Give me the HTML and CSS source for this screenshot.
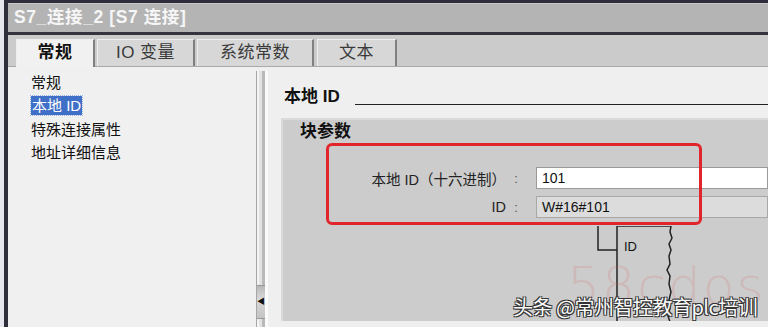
FILE: index.html
```html
<!DOCTYPE html>
<html lang="zh">
<head>
<meta charset="utf-8">
<link rel="stylesheet" href="styles.css">
</head>
<body>
<div class="window">
  <div class="titlebar">S7_连接_2 [S7 连接]</div>
  <div class="tabbar">
    <div class="tab active t1">常规</div>
    <div class="tab t2">IO 变量</div>
    <div class="tab t3">系统常数</div>
    <div class="tab t4">文本</div>
  </div>
  <div class="main">
    <div class="nav">
      <div class="nav-item">常规</div>
      <div class="nav-item"><span class="sel">本地 ID</span></div>
      <div class="nav-item">特殊连接属性</div>
      <div class="nav-item">地址详细信息</div>
    </div>
    <div class="splitter"><div class="handle">&#9664;</div></div>
    <div class="content">
      <div class="heading"><span>本地 ID</span><div class="rule"></div></div>
      <div class="group">
        <div class="group-title">块参数</div>
        <div class="form">
          <div class="lbl">本地 ID（十六进制）</div><div class="colon">:</div><div class="field">101</div>
          <div class="lbl">ID</div><div class="colon">:</div><div class="field ro">W#16#101</div>
        </div>
        <svg class="diagram" width="90" height="96" viewBox="0 0 90 96">
          <path d="M4 0 V24 H23" fill="none" stroke="#222" stroke-width="1.5"/>
          <path d="M23 96 V0 H77 L76 6 L78 12 L75 18 L77 24 L75 30 L76 38 L73 44 L76 50 L75 58 L77 66 L75 74 L76 82 L74 90 L76 96" fill="none" stroke="#222" stroke-width="1.5"/>
          <text x="30" y="25" font-family="Liberation Sans, sans-serif" font-size="13" fill="#111">ID</text>
        </svg>
        <div class="annot"></div>
        <div class="wm-faint">58cdos</div>
        <div class="wm">头条 @常州智控教育plc培训</div>
      </div>
    </div>
  </div>
</div>
</body>
</html>
```
FILE: styles.css
```css
* { box-sizing: border-box; }
html, body { margin: 0; padding: 0; }
body {
  width: 768px;
  height: 327px;
  overflow: hidden;
  background: #e6e6ec;
  font-family: "Liberation Sans", "Noto Sans CJK SC", sans-serif;
  color: #111;
}
.window {
  margin-left: 4px;
  height: 327px;
  border-left: 4px solid #2e2e3a;
  border-top: 3px solid #2e2e3a;
  display: flex;
  flex-direction: column;
  background: #efefef;
}
.titlebar {
  height: 32px;
  background: #b4b4b4;
  border-top: 1px solid #c8c8c8;
  border-bottom: 3px solid #34343f;
  padding-left: 6px;
  font-size: 17.5px;
  font-weight: bold;
  color: #f6f6f6;
  line-height: 27px;
  letter-spacing: 0.6px;
}
.tabbar {
  height: 32px;
  background: #cbcbcb;
  display: flex;
  align-items: flex-end;
  padding-left: 8px;
  gap: 2px;
  border-bottom: 1px solid #a9a9a9;
}
.tab {
  height: 27px;
  background: #d7d7d7;
  border-top: 1px solid #eeeeee;
  border-left: 1px solid #eeeeee;
  border-right: 2px solid #808080;
  font-size: 17px;
  line-height: 25px;
  text-align: center;
  color: #3a3a3a;
  letter-spacing: 0.5px;
}
.tab.active {
  background: #f1f1f1;
  font-weight: bold;
  color: #111;
  height: 28px;
  margin-bottom: -1px;
}
.t1 { width: 79px; }
.t2 { width: 98px; }
.t3 { width: 117px; }
.t4 { width: 80px; margin-left: 1px; }
.main {
  flex: 1;
  display: flex;
  min-height: 0;
}
.nav {
  width: 248px;
  background: #f0f0f0;
  padding-top: 4px;
  padding-left: 23px;
}
.nav-item {
  height: 23.3px;
  font-size: 15px;
  line-height: 23px;
  color: #111;
}
.sel {
  background: #3f6fc6;
  color: #fff;
  padding: 1px 1px;
  outline: 1px dotted #9ab4e6;
}
.splitter {
  width: 12px;
  background: #e2e2e2;
  border-left: 1px solid #a6a6a6;
  border-right: 3px solid #fafafa;
  box-shadow: inset 2px 0 0 #f4f4f4, inset -3px 0 0 #b9b9b9;
  position: relative;
  margin-top: 4px;
}
.handle {
  position: absolute;
  left: 0;
  top: 214px;
  width: 8px;
  height: 34px;
  background: linear-gradient(#b8b8b8, #d8d8d8 40%, #c4c4c4);
  border-top: 1px solid #999;
  border-bottom: 1px solid #999;
  font-size: 8px;
  line-height: 32px;
  text-align: center;
  color: #111;
}
.content {
  flex: 1;
  padding-left: 13px;
  padding-top: 18px;
  background: #efefef;
}
.heading {
  display: flex;
  align-items: flex-end;
  height: 24px;
  padding-left: 3px;
  font-size: 17px;
  font-weight: bold;
}
.heading span { line-height: 24px; }
.rule {
  flex: 1;
  margin-left: 15px;
  margin-bottom: 4px;
  border-bottom: 1.5px solid #222;
}
.group {
  position: relative;
  margin-top: 9px;
  height: 203px;
  background: #cccccc;
  border-left: 2px solid #dadada;
  border-top: 2px solid #dadada;
  overflow: hidden;
}
.group-title {
  padding-left: 17px;
  font-size: 17px;
  font-weight: bold;
  line-height: 24px;
}
.form {
  margin-top: 23px;
  display: grid;
  grid-template-columns: 223px 20px 1fr;
  row-gap: 7px;
  align-items: center;
}
.lbl {
  text-align: right;
  font-size: 14.5px;
  color: #222;
}
.colon {
  text-align: center;
  font-size: 13px;
  color: #555;
}
.field {
  margin-left: 10px;
  height: 22px;
  background: #ffffff;
  border: 1px solid #9a9a9a;
  font-size: 14px;
  line-height: 20px;
  padding-left: 5px;
}
.field.ro { background: #dcdcdc; border-color: #a8a8a8; }
.diagram {
  display: block;
  margin-top: 8px;
  margin-left: 311px;
}
.annot {
  position: absolute;
  left: 43px;
  top: 23px;
  width: 376px;
  height: 82px;
  border: 3px solid #e2252b;
  border-radius: 6px;
}
.wm-faint {
  position: absolute;
  left: 284px;
  top: 138px;
  font-size: 52px;
  line-height: 56px;
  font-family: "DejaVu Sans", sans-serif;
  font-weight: 300;
  color: rgba(215, 90, 90, 0.16);
  letter-spacing: 2px;
}
.wm {
  position: absolute;
  left: 230px;
  top: 172px;
  font-size: 20px;
  font-family: "Noto Sans CJK SC", sans-serif;
  color: #fafafa;
  white-space: nowrap;
  text-shadow: 1px 1px 0 #333, -1px -1px 0 #333, 1px -1px 0 #333, -1px 1px 0 #333;
  letter-spacing: -0.5px;
}
```
